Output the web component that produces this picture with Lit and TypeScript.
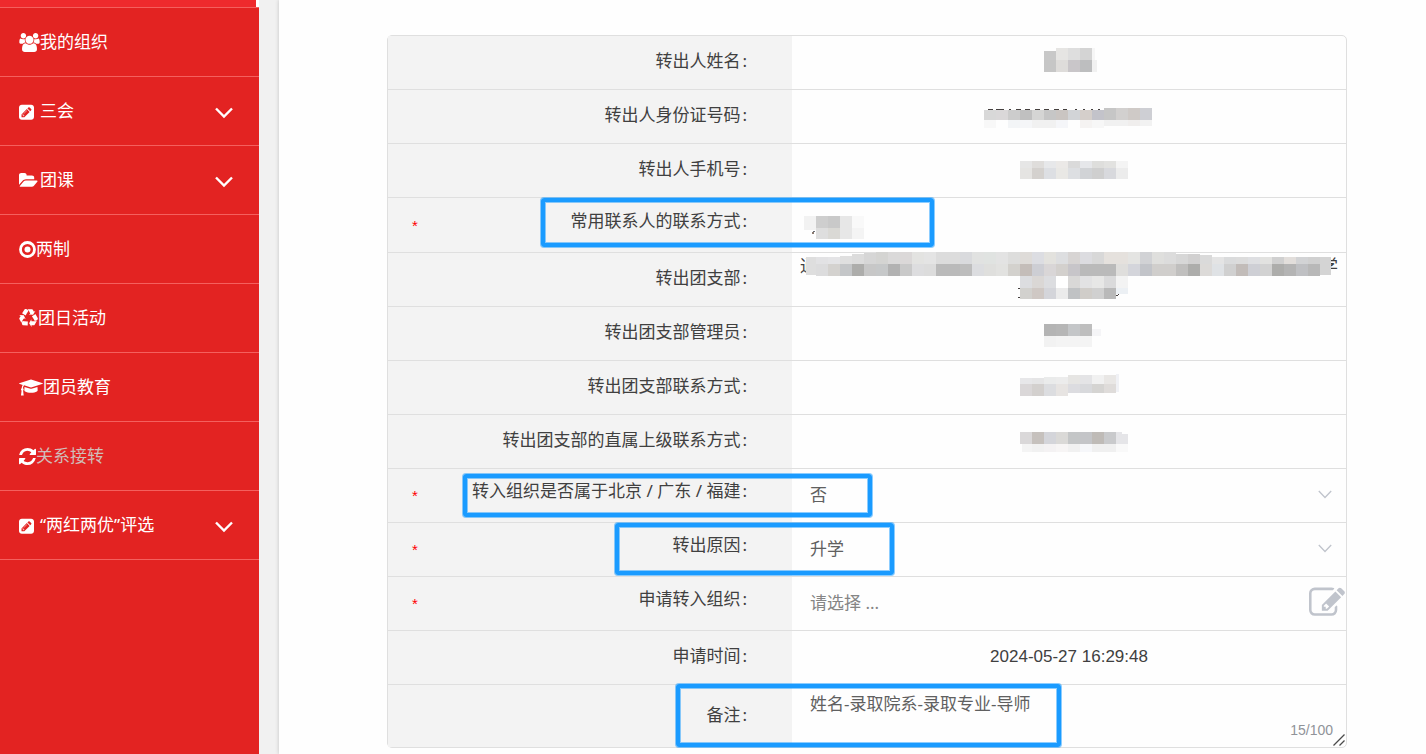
import { LitElement, html, svg, css, nothing } from "lit";
import type { TemplateResult } from "lit";
import { customElement, property } from "lit/decorators.js";
import { classMap } from "lit/directives/class-map.js";
import { styleMap } from "lit/directives/style-map.js";

const TEXT = css`"Noto Sans", "Noto Sans CJK SC", "Microsoft YaHei", sans-serif`;
const LATIN = css`"Liberation Sans", Arial, "Noto Sans CJK SC", sans-serif`;

/* ---------- icons ---------- */

interface Icon { w: number; box: string; art: TemplateResult }

const ICONS: Record<string, Icon> = {
  users: {
    w: 21, box: "0 0 1920 1792",
    art: svg`<path d="M593 896q-162 5-265 128h-134q-82 0-138-40.5t-56-118.5q0-353 124-353 6 0 43.5 21t97.5 42.5 119 21.5q67 0 133-23-5 37-5 66 0 139 81 256zm1071 637q0 120-73 189.5t-194 69.5h-874q-121 0-194-69.5t-73-189.5q0-53 3.5-103.5t14-109 26.5-108.5 43-97.5 62-81 85.5-53.5 111.5-20q10 0 43 21.5t73 48 107 48 135 21.5 135-21.5 107-48 73-48 43-21.5q61 0 111.5 20t85.5 53.5 62 81 43 97.5 26.5 108.5 14 109 3.5 103.5zm-1024-1277q0 106-75 181t-181 75-181-75-75-181 75-181 181-75 181 75 75 181zm704 384q0 159-112.5 271.5t-271.5 112.5-271.5-112.5-112.5-271.5 112.5-271.5 271.5-112.5 271.5 112.5 112.5 271.5zm576 225q0 78-56 118.5t-138 40.5h-134q-103-123-265-128 81-117 81-256 0-29-5-66 66 23 133 23 59 0 119-21.5t97.5-42.5 43.5-21q124 0 124 353zm-128-609q0 106-75 181t-181 75-181-75-75-181 75-181 181-75 181 75 75 181z"/>`,
  },
  pencil: {
    w: 15, box: "0 0 1536 1792",
    art: svg`<path d="M404 1180l152 152-52 52h-56v-96h-96v-56zm414-390q14 13-3 30l-291 291q-17 17-30 3-14-13 3-30l291-291q17-17 30-3zm-274 690l544-544-288-288-544 544v288h288zm608-608l92-92q28-28 28-68t-28-68l-152-152q-28-28-68-28t-68 28l-92 92zm384-384v960q0 119-84.5 203.5t-203.5 84.5h-960q-119 0-203.5-84.5t-84.5-203.5v-960q0-119 84.5-203.5t203.5-84.5h960q119 0 203.5 84.5t84.5 203.5z" fill-rule="evenodd"/>`,
  },
  folder: {
    w: 19, box: "0 0 1920 1792",
    art: svg`<path d="M1879 952q0 31-31 66l-336 396q-43 51-120.5 86.5t-143.5 35.5h-1088q-34 0-60.5-13t-26.5-43q0-31 31-66l336-396q43-51 120.5-86.5t143.5-35.5h1088q34 0 60.5 13t26.5 43zm-343-344v160h-832q-94 0-197 47.5t-164 119.5l-337 396-5 6q0-4-.5-12.5t-.5-12.5v-960q0-92 66-158t158-66h320q92 0 158 66t66 158v32h544q92 0 158 66t66 158z"/>`,
  },
  target: {
    w: 17, box: "0 0 17 18",
    art: svg`<circle cx="8.5" cy="9" r="7" fill="none" stroke="currentColor" stroke-width="2.8"/><circle cx="8.5" cy="9" r="3"/>`,
  },
  recycle: {
    w: 19, box: "0 0 1792 1792",
    art: svg`<path d="M836 1169l-15 368-2 22-420-29q-36-3-67-31.5t-47-65.5q-11-27-14.5-55t4-65 12-55 21.5-64 19-53q78 12 509 28zm-387-586l180 379-147-92q-63 72-111.5 144.5t-72.5 125-39.5 94.5-18.5 63l-4 21-190-357q-17-26-18-56t6-47l8-18q35-63 114-188l-140-86zm1231 517l-188 359q-12 29-36.5 46.5t-43.5 20.5l-18 4q-71 7-219 12l8 164-230-367 211-362 7 173q170 16 283 5t170-33zm-785-924q-47 63-265 435l-317-187-19-12 225-356q20-31 60-45t80-10q24 2 48.5 12t42 21 41.5 33 36 34.5 36 39.5 32 35zm655 307l212 363q18 37 12.5 76t-27.5 74q-13 20-33 37t-38 28-48.5 22-47 16-51.5 14-46 12q-34-72-265-436l313-195zm-143-226l142-83-220 373-419-20 151-86q-34-89-75-166t-75.5-123.5-64.5-80-47-46.5l-17-13 405 1q31-3 58 10.5t39 28.5l11 15q39 61 112 190z"/>`,
  },
  cap: {
    w: 24, box: "0 0 2304 1792",
    art: svg`<path d="M1774 836l18 316q4 69-82 128t-235 93.5-323 34.5-323-34.5-235-93.5-82-128l18-316 574 181q22 7 48 7t48-7zm530-324q0 23-22 31l-1120 352q-4 1-10 1t-10-1l-652-206q-43 34-71 111.5t-34 178.5q63 36 63 109 0 69-58 107l58 433q2 14-8 25-9 11-24 11h-192q-15 0-24-11-10-11-8-25l58-433q-58-38-58-107 0-73 65-111 11-207 98-330l-333-104q-22-8-22-31t22-31l1120-352q4-1 10-1t10 1l1120 352q22 8 22 31z"/>`,
  },
  refresh: {
    w: 17, box: "128 64 1536 1664",
    art: svg`<path d="M1639 1056q0 5-1 7-64 268-268 434.5t-478 166.5q-146 0-282.5-55t-243.5-157l-129 129q-19 19-45 19t-45-19-19-45v-448q0-26 19-45t45-19h448q26 0 45 19t19 45-19 45l-137 137q71 66 161 102t187 36q134 0 250-65t186-179q11-17 53-117 8-23 30-23h192q13 0 22.5 9.5t9.5 22.5zm25-800v448q0 26-19 45t-45 19h-448q-26 0-45-19t-19-45 19-45l138-138q-148-137-349-137-134 0-250 65t-186 179q-11 17-53 117-8 23-30 23h-199q-13 0-22.5-9.5t-9.5-22.5v-7q65-268 270-434.5t480-166.5q146 0 284 55.5t245 156.5l130-129q19-19 45-19t45 19 19 45z"/>`,
  },
};

const icon = (name: string) => {
  const i = ICONS[name];
  return html`<svg class="icon" width=${i.w} height="19" viewBox=${i.box} fill="currentColor" aria-hidden="true">${i.art}</svg>`;
};

/* ---------- side menu ---------- */

interface MenuItem { text: string; icon: string; sub?: boolean; current?: boolean }

const MENU: MenuItem[] = [
  { text: "我的组织", icon: "users" },
  { text: "三会", icon: "pencil", sub: true },
  { text: "团课", icon: "folder", sub: true },
  { text: "两制", icon: "target" },
  { text: "团日活动", icon: "recycle" },
  { text: "团员教育", icon: "cap" },
  { text: "关系接转", icon: "refresh", current: true },
  { text: "“两红两优”评选", icon: "pencil", sub: true },
];

@customElement("side-menu")
export class SideMenu extends LitElement {
  static styles = css`
    :host { display: block; background: #e32322; color: #fff; font: 17px/24px ${TEXT}; }
    .peek { height: 7px; margin-right: 3px; background: #ee2a2d; box-shadow: 3px 0 0 #fff; }
    .list { list-style: none; margin: 0; padding: 0; border-top: 1px solid #f4605e; }
    .row { border-bottom: 1px solid #f4605e; }
    .item {
      box-sizing: border-box; display: flex; align-items: center; width: 100%; height: 68px;
      padding: 0 26px 0 19px; border: 0; background: none; color: inherit; font: inherit;
      text-decoration: none; text-align: left; cursor: pointer;
    }
    .slot { display: flex; flex: none; }
    .sub .slot { width: 21px; }
    .name { flex: 1; }
    .chevron { margin-top: 4px; }
    .current .name { color: #d0bdb9; }
  `;

  render() {
    return html`
      <div class="peek"></div>
      <nav>
        <ul class="list">
          ${MENU.map((m) => html`<li class="row">${m.sub
            ? html`<button class="item sub" type="button" aria-expanded="false">
                <span class="slot">${icon(m.icon)}</span><span class="name">${m.text}</span>
                <svg class="chevron" width="18" height="12" viewBox="0 0 18 12" fill="none" stroke="currentColor" stroke-width="2.4" aria-hidden="true"><path d="M1 1.5l8 8 8-8"/></svg>
              </button>`
            : html`<a class=${classMap({ item: true, current: !!m.current })} href="#"><span class="slot">${icon(m.icon)}</span><span class="name">${m.text}</span></a>`}</li>`)}
        </ul>
      </nav>`;
  }
}

/* ---------- pixelated values ---------- */

/* A band is one strip of 12px tiles: left, top, height, tile colours ("-" leaves a gap). */
type Band = [number, number, number, string];
/* A patch is a single odd-sized tile: left, top, width, height, colour. */
type Patch = [number, number, number, number, string];
interface Mosaic { bands: Band[]; patches?: Patch[] }

const TILE = 12;

const mosaic = (m: Mosaic) => html`
  <svg class="mosaic" height="53" viewBox="0 0 554 53" shape-rendering="crispEdges" aria-hidden="true">
    ${m.bands.map(([x, y, h, tiles]) => tiles.split(" ").map((c, i) => c === "-" ? nothing
      : svg`<rect x=${x + i * TILE} y=${y} width=${TILE} height=${h} fill=${"#" + c}></rect>`))}
    ${(m.patches ?? []).map(([x, y, w, h, c]) => svg`<rect x=${x} y=${y} width=${w} height=${h} fill=${"#" + c}></rect>`)}
  </svg>`;

const INK = "45403f";

const NAME: Mosaic = {
  bands: [[264, 12, 12, "e6e5e3 dedede d4d4d4"], [252, 24, 12, "c6c6c6 dedcda c9c6c9 bdbebf"]],
  patches: [[252, 15, 12, 9, "c8c8c8"], [300, 12, 3, 12, "f6f6f6"], [300, 24, 5, 12, "f1f1f1"]],
};
const ID_NUMBER: Mosaic = {
  bands: [
    [192, 20, 10, "d8d8d8 dad8d9 cccccc c0c0c0 d5d5d4 c6c6c6 cac5c2 d2d4d7 d5cfcb c3c3ca"],
    [312, 18, 12, "c6c6c6 d2d0cf cfcac7 cecfd4"],
    [192, 30, 8, "f8f8f8 - f3f5f7 f5f6f8 f1f1f1 f1f1f1 f5f6f9 - f5f3f2 f7f7f7"],
    [312, 30, 6, "f1f1f1 f1f1f1 f0eeed f2f2f2"],
  ],
  patches: [
    [196, 19, 5, 1, INK], [204, 19, 8, 1, INK], [217, 19, 2, 1, INK], [224, 19, 5, 1, INK],
    [233, 19, 5, 1, INK], [243, 19, 5, 1, INK], [252, 19, 5, 1, INK], [262, 19, 5, 1, INK],
    [271, 19, 4, 1, INK], [283, 19, 2, 1, INK], [291, 19, 2, 1, INK], [299, 19, 2, 1, INK], [306, 19, 2, 1, INK],
  ],
};
const PHONE: Mosaic = {
  bands: [
    [228, 17, 7, "e6e6e6 dfdddb e7e8ea ebe9e7 dadada e6e7ea dededc e2e2e0 f4f4f4"],
    [228, 24, 11, "e5e4e2 d4d1ce dddfe3 e9e8e5 dddfe2 d1d3d6 cfcfcf d8d9dd ececec"],
  ],
};
const CONTACT: Mosaic = {
  bands: [[24, 18, 12, "cecece c9c9c9 e7e7e7 f9f9f9"], [24, 30, 11, "dedede dad9d5 e7e7e7 f4f4f4"]],
  patches: [[12, 18, 12, 14, "f2f2f2"], [21, 33, 2, 1, "6b6f78"], [20, 34, 2, 2, "8a7a70"]],
};
const BRANCH: Mosaic = {
  bands: [
    [84, -1, 12, "d4d4d2 dad9d9 dbd8d8 e3e3e1 e4e4e4 dcdcdc dcdcdc d9dadd e1e2e1 e0e3e1 e3e3e3 dddddc dedbd8 dcdde2 e3e2de dddee0 d7d4d3 dcdce0 d8d8d8 e5e1dd e5e1dd e4e4e2 d1d2d5 dfdfdd dcdcdc"],
    [420, 4, 7, "e4e4e4 dadbdc dcdcdc dedfe2 e2e2e0 d0d0d0 e2dedb d2d3d5 d0d0d0"],
    [24, 11, 12, "dcdcdd d4d2cf c4c6c8 adadab c7c7c7 c6c8c9 b2b2b2 c9c9c9 dddddf dcdcdc bababa bababa bdbdbd dcdde0 dfdfdd e2e2e0 d3d1cd c4bdb9 cdced4 d9d6d7 d3d0cd c7c5c9 bababa bababa bababa dfdedc d4d5db c2c4c9 d0cecc d0cecc c0bfbe adadab dcdad8 dfe2e5 d0d0d0 c2bcb9 cecfd5 d2d2d2 adadab b4b4b4 bfc0c3 b8b8b8"],
    [228, 23, 12, "dcdde0 dad7d5 dcdde0 ffffff d9d8d7 e2e2e3 e7e7e6 dadadb f3f3f3"],
    [228, 35, 11, "d2d1ce cfc8c4 d4d5da ebebeb c0c2c4 d0cdc9 d0d0d0 b9b9b9"],
  ],
  patches: [
    [14, 4, 10, 18, "dedede"], [24, 4, 12, 7, "e2e2e4"], [36, 4, 12, 7, "e4e4e6"], [48, 3, 12, 8, "dfdfdf"],
    [60, 1, 12, 10, "dcdcdc"], [72, 0, 12, 11, "d6d6d6"], [384, 1, 12, 10, "d7d7d7"], [396, 1, 12, 10, "d1d0d0"],
    [408, 2, 12, 9, "dadada"], [528, 4, 11, 18, "d4d4d4"], [324, 35, 12, 6, "ecf0f4"],
    [226, 35, 2, 1, INK], [226, 44, 2, 1, INK], [324, 42, 2, 1, INK], [326, 41, 1, 1, INK],
  ],
};
const ADMIN: Mosaic = {
  bands: [[252, 17, 12, "b4b4b4 b6b6b6 c4c6c8 bebebe"], [252, 29, 11, "f2f2f2 f4f4f4 f4f4f4 f4f4f4"]],
  patches: [[300, 22, 9, 7, "f5f5f7"]],
};
const BRANCH_PHONE: Mosaic = {
  bands: [
    [228, 17, 6, "e7e7e9 e5e5e6"], [252, 16, 7, "eaebeb ececec"], [276, 14, 9, "e6e5e3 e4e4e6 f1f1f1 e9e7e5"],
    [228, 23, 12, "dad7d8 d3d0ce dcdde0 e7e4e2"], [276, 23, 9, "dcdce0 d8d9dc d5d4d2 dfdcda"],
  ],
  patches: [[324, 13, 3, 18, "f0f1f5"]],
};
const PARENT_PHONE: Mosaic = {
  bands: [
    [228, 17, 12, "dad8d9 c6c1bd d4d5da dad9d7 c4c6c7 c4c5c8 bfbbb7 c9cacc"],
    [240, 29, 8, "f1f1f1 f4f2f3 f7f5f5 f1f1f1 f6f7fa f0f0f0 f0f0f0 f9f9f9"],
  ],
  patches: [[324, 17, 6, 12, "e5e5e8"], [330, 19, 6, 10, "e5e5e8"], [230, 29, 10, 8, "f4f4f4"]],
};

/* ---------- form ---------- */

/* A highlight frame, measured from its row's corner: left, top, width, height. */
type Frame = [number, number, number, number];

@customElement("form-row")
export class FormRow extends LitElement {
  @property() label = "";
  @property() kind: "plain" | "text" | "select" | "picker" | "note" = "plain";
  @property() value = "";
  @property({ attribute: false }) mask?: Mosaic;
  @property({ attribute: false }) frame?: Frame;

  static styles = css`
    :host { display: block; border-bottom: 1px solid #dfdfdf; color: #404040; font: 17px/24px ${TEXT}; }
    :host(:last-of-type) { border-bottom: 0; }
    .row { position: relative; display: grid; grid-template-columns: 404px 1fr; min-height: 53px; }
    .text { min-height: 54px; }
    .note { min-height: 62px; }
    .head { display: flex; align-items: center; background: #f3f3f3; padding: 0 45px 3px 24px; }
    .head label, .head .title { margin-left: auto; }
    .colon { margin-left: 2px; }
    .need { color: #f00; font: 15px/20px ${LATIN}; padding-top: 4px; }
    .needed label { padding-bottom: 6px; }
    .body { position: relative; display: flex; align-items: center; justify-content: center; min-width: 0; }
    .date { font-family: ${LATIN}; padding-bottom: 2px; }
    .ends { align-self: flex-start; display: flex; flex: 1; justify-content: space-between; padding: 1px 8px 0; }
    .field {
      box-sizing: border-box; width: 100%; height: 100%; margin: 0; padding: 0 18px 2px; border: 0; outline: 0;
      background: transparent; color: #606060; font: inherit; appearance: none; border-radius: 0;
    }
    .field::placeholder { color: #858585; opacity: 1; }
    .area { display: block; height: 62px; padding: 7px 18px; resize: vertical; }
    .area::-webkit-resizer { background: transparent; }
    .grip { position: absolute; right: 1px; bottom: 1px; pointer-events: none; }
    .mosaic { position: absolute; left: 0; top: 0; width: 100%; overflow: visible; pointer-events: none; }
    .arrow { position: absolute; right: 14px; top: 21px; pointer-events: none; }
    .pick { position: absolute; right: 1px; top: 8px; display: flex; padding: 0; border: 0; background: none; color: #c0c4cc; cursor: pointer; }
    .count { position: absolute; right: 13px; bottom: 7px; color: #909399; font: 14px/20px ${LATIN}; }
    .frame {
      position: absolute; z-index: 1; box-sizing: border-box; border: 4px solid #1a9bff; border-radius: 3px;
      box-shadow: 0 0 0 1px #1a9bff80, inset 0 0 0 1px #1a9bff80; pointer-events: none;
    }
  `;

  private control() {
    switch (this.kind) {
      case "text":
        return html`<input id="f" class="field" type="text" />`;
      case "select":
        return html`<select id="f" class="field"><option>${this.value}</option></select>
          <svg class="arrow" width="14" height="9" viewBox="0 0 14 9" fill="none" stroke="#c0c4cc" stroke-width="1.3" aria-hidden="true"><path d="M.8 1l6.2 6.5L13.2 1"/></svg>`;
      case "picker":
        return html`<input id="f" class="field" type="text" placeholder="请选择 ..." />
          <button class="pick" type="button" aria-label="选择">
            <svg width="36" height="36" viewBox="0 0 1792 1792" fill="currentColor" aria-hidden="true"><path d="M888 1184l116-116-152-152-116 116v56h96v96h56zm520-126v190q0 119-84.5 203.5t-203.5 84.5h-832q-119 0-203.5-84.5t-84.5-203.5v-832q0-119 84.5-203.5t203.5-84.5h832q63 0 117 25 15 7 18 23 3 17-9 29l-49 49q-14 14-32 8-23-6-45-6h-832q-66 0-113 47t-47 113v832q0 66 47 113t113 47h832q66 0 113-47t47-113v-126q0-13 9-22l64-64q15-15 35-7t20 29zm-96-738l288 288-672 672h-288v-288zm444 132l-92 92-288-288 92-92q28-28 68-28t68 28l152 152q28 28 28 68t-28 68z" fill-rule="evenodd"/></svg>
          </button>`;
      case "note":
        return html`<textarea id="f" class="field area" maxlength="100" .value=${this.value}></textarea><span class="count">${this.value.length}/100</span>
          <svg class="grip" width="12" height="12" viewBox="0 0 12 12" fill="none" stroke="#4a4a4a" stroke-width="1.3" aria-hidden="true"><path d="M.5 11.5l11-11M6.5 11.5l5-5"/></svg>`;
      default:
        if (this.value.includes("|")) return html`<span class="ends">${this.value.split("|").map((t) => html`<span>${t}</span>`)}</span>`;
        return html`<span class="date">${this.value}</span>`;
    }
  }

  render() {
    const needed = this.kind === "text" || this.kind === "select" || this.kind === "picker";
    const f = this.frame;
    const caption = html`${this.label}<span class="colon">:</span>`;
    return html`
      <div class=${classMap({ row: true, needed, [this.kind]: true })}>
        <div class="head">
          ${needed ? html`<span class="need">*</span>` : nothing}
          ${this.kind === "plain" ? html`<span class="title">${caption}</span>` : html`<label for="f">${caption}</label>`}
        </div>
        <div class="body">${this.control()}${this.mask ? mosaic(this.mask) : nothing}</div>
        ${f ? html`<span class="frame" style=${styleMap({ left: `${f[0]}px`, top: `${f[1]}px`, width: `${f[2]}px`, height: `${f[3]}px` })}></span>` : nothing}
      </div>`;
  }
}

interface RowData { label: string; kind?: string; value?: string; mask?: Mosaic; frame?: Frame }

const ROWS: RowData[] = [
  { label: "转出人姓名", mask: NAME },
  { label: "转出人身份证号码", mask: ID_NUMBER },
  { label: "转出人手机号", mask: PHONE },
  { label: "常用联系人的联系方式", kind: "text", mask: CONTACT, frame: [153, 0, 393, 49] },
  { label: "转出团支部", value: "通|学", mask: BRANCH },
  { label: "转出团支部管理员", mask: ADMIN },
  { label: "转出团支部联系方式", mask: BRANCH_PHONE },
  { label: "转出团支部的直属上级联系方式", mask: PARENT_PHONE },
  { label: "转入组织是否属于北京 / 广东 / 福建", kind: "select", value: "否", frame: [75, 5, 409, 43] },
  { label: "转出原因", kind: "select", value: "升学", frame: [227, 0, 279, 52] },
  { label: "申请转入组织", kind: "picker" },
  { label: "申请时间", value: "2024-05-27 16:29:48" },
  { label: "备注", kind: "note", value: "姓名-录取院系-录取专业-导师", frame: [288, -1, 385, 63] },
];

@customElement("app-root")
export class AppRoot extends LitElement {
  static styles = css`
    :host { display: grid; grid-template-columns: 259px 1fr; height: 100vh; overflow: hidden; background: #f1f1f1; }
    .page { margin-left: 20px; padding: 35px 79px 0 108px; background: #fefefe; box-shadow: 0 0 4px #0003; }
    .form { border: 1px solid #dfdfdf; border-radius: 5px; }
  `;

  render() {
    return html`
      <side-menu></side-menu>
      <main class="page">
        <form class="form">
          ${ROWS.map((r) => html`<form-row .label=${r.label} .kind=${r.kind ?? "plain"} .value=${r.value ?? ""} .mask=${r.mask} .frame=${r.frame}></form-row>`)}
        </form>
      </main>`;
  }
}
